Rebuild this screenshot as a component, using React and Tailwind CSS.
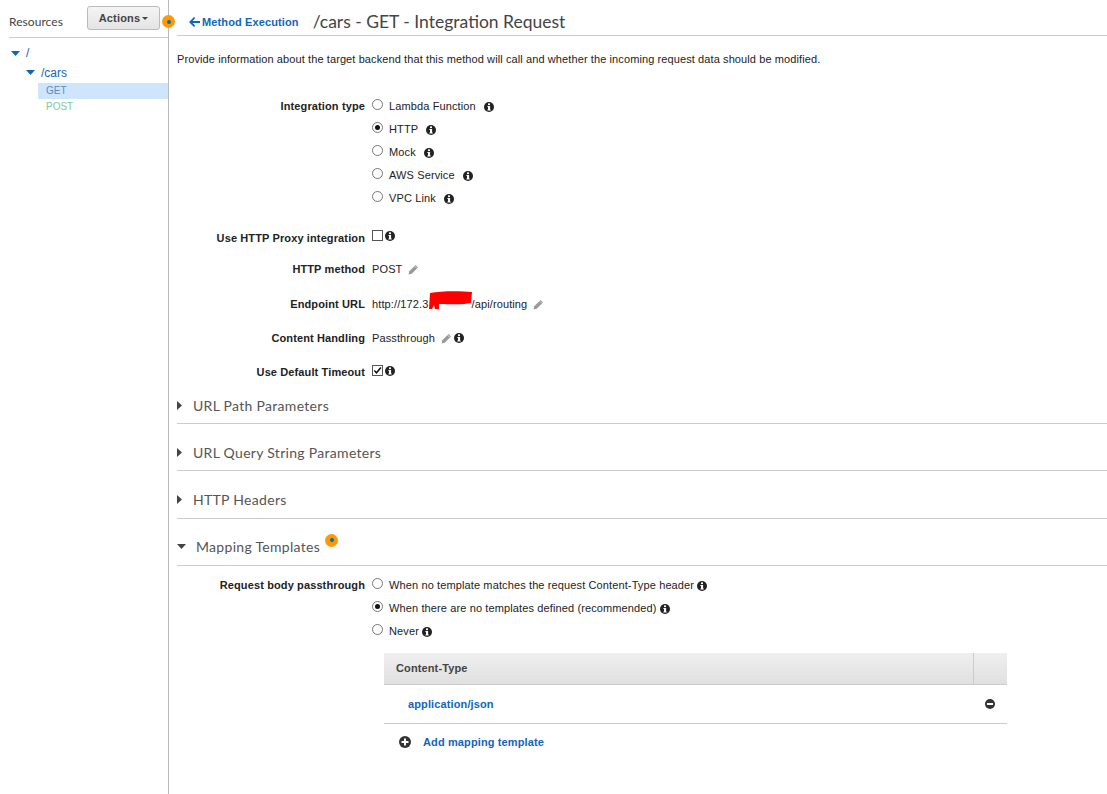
const ARIAL = "font-['Liberation_Sans',Arial,sans-serif]";

function Info({ className = "" }) {
  return (
    <svg width="10" height="10" viewBox="0 0 10 10" className={"shrink-0 " + className}>
      <circle cx="5" cy="5" r="5" fill="#222" />
      <rect x="4" y="1.4" width="2" height="1.7" fill="#fff" />
      <path d="M3.4 4h2.7v3.6h.6v1H3.4v-1H4V5h-.6z" fill="#fff" />
    </svg>
  );
}

function Pencil() {
  return (
    <svg width="11" height="11" viewBox="0 0 11 11" className="shrink-0">
      <path d="M0.500 10.500l.8-3.200L7.600 1l2.400 2.400-6.300 6.300z" fill="#999" />
      <path d="M6.600 2.100l2.300 2.300" stroke="#fff" strokeWidth="0.6" />
    </svg>
  );
}

function Radio({ checked }) {
  return (
    <span className="w-[11px] h-[11px] mb-[4px] rounded-full border border-[#777] bg-white flex items-center justify-center shrink-0">
      {checked && <span className="w-[5px] h-[5px] rounded-full bg-[#111]" />}
    </span>
  );
}

function Dot({ className = "" }) {
  return (
    <span className={"w-[13px] h-[13px] rounded-full bg-[#f90] flex items-center justify-center shrink-0 " + className}>
      <span className="w-[4px] h-[4px] rounded-full bg-[#1166bb]" />
    </span>
  );
}

function Caret({ open, className = "" }) {
  return open ? (
    <svg width="9" height="5" viewBox="0 0 9 5" className={"shrink-0 " + className}>
      <path d="M0 0h9L4.500 5z" fill="currentColor" />
    </svg>
  ) : (
    <svg width="5" height="9" viewBox="0 0 5 9" className={"shrink-0 " + className}>
      <path d="M0 0l5 4.500L0 9z" fill="currentColor" />
    </svg>
  );
}

function Row({ label, h, labelClass = "", children }) {
  return (
    <div className="flex items-center" style={{ height: h }}>
      <div className={"w-[188px] text-right font-bold text-[#222] shrink-0 " + labelClass}>{label}</div>
      <div className="pl-[7px] flex items-center text-[#222]">{children}</div>
    </div>
  );
}

function RadioRow({ checked, label, gap = "ml-[8px]" }) {
  return (
    <div className="h-[23px] flex items-center text-[#222]">
      <Radio checked={checked} />
      <span className="ml-[6px]">{label}</span>
      <Info className={gap} />
    </div>
  );
}

function Section({ label, h = "h-[47px]", pt = "pt-[11px]" }) {
  return (
    <div className={h + " " + pt + " border-b border-[#ccc] flex items-center text-[#555] font-['Lato',sans-serif] text-[14px] tracking-[0.3px]"}>
      <Caret className="text-[#444] mr-[11px]" />
      {label}
    </div>
  );
}

export default function App() {
  return (
    <div className={"flex w-[1107px] h-[794px] bg-white overflow-hidden text-[11px] tracking-[0.12px] " + ARIAL}>
      <aside className="w-[169px] shrink-0 border-r border-[#bbb] pl-[9px]">
        <div className="h-[38px] border-b border-[#ccc] flex items-start justify-between">
          <span className="mt-[13px] text-[#444] font-['Lato',sans-serif] text-[12px] tracking-[0.05px]">Resources</span>
          <button className="mt-[6px] w-[73px] h-[24px] rounded-[3px] border border-[#bbb] bg-gradient-to-b from-[#f4f4f4] to-[#e4e4e4] text-[#444] font-bold tracking-[0.2px] flex items-center justify-center gap-[2px] mr-[8px]">
            Actions
            <svg width="6" height="3" viewBox="0 0 6 3"><path d="M0 0h6L3 3z" fill="#444" /></svg>
          </button>
        </div>
        <div className="pt-[6px] text-[#1166bb] text-[12px] tracking-normal">
          <div className="h-[18px] flex items-center pl-[2px]">
            <Caret open className="text-[#1166bb]" />
            <span className="ml-[6px]">/</span>
          </div>
          <div className="h-[21px] flex items-center pl-[17px]">
            <Caret open className="text-[#1166bb]" />
            <span className="ml-[6px]">/cars</span>
          </div>
          <div className="ml-[29px] h-[16px] bg-[#cfe5fb] flex items-center pl-[8px] pb-[2px] text-[#5a8bc4] text-[10px]">GET</div>
          <div className="ml-[29px] h-[16px] flex items-center pl-[8px] pb-[2px] text-[#7fc99a] text-[10px]">POST</div>
        </div>
      </aside>

      <main className="flex-1 min-w-0 relative pl-[8px]">
        <Dot className="absolute left-[-7px] top-[15px]" />
        <header className="h-[36px] border-b border-[#ccc] flex items-center pl-[12px] pt-[9px]">
          <a className="flex items-center text-[#1166bb] font-bold whitespace-nowrap">
            <svg width="11" height="10" viewBox="0 0 11 10" className="mr-[2px]">
              <path d="M5 0l1.200 1.200-2.600 2.800H11v2H3.600l2.600 2.800L5 10 0 5z" fill="#1166bb" />
            </svg>
            Method Execution
          </a>
          <h1 className="ml-[14px] text-[17.5px] leading-none tracking-normal text-[#444] font-['Lato',sans-serif] font-normal whitespace-nowrap">/cars - GET - Integration Request</h1>
        </header>
        <p className="mt-[16px] h-[14px] leading-[14px] text-[#222] tracking-[0.1px] whitespace-nowrap">Provide information about the target backend that this method will call and whether the incoming request data should be modified.</p>

        <div className="mt-[29px]">
          <div className="flex">
            <div className="w-[188px] text-right font-bold text-[#222] h-[23px] leading-[23px] shrink-0">Integration type</div>
            <div className="pl-[7px]">
              <RadioRow label="Lambda Function" />
              <RadioRow checked label="HTTP" />
              <RadioRow label="Mock" />
              <RadioRow label="AWS Service" />
              <RadioRow label="VPC Link" />
            </div>
          </div>
          <div className="mt-[14px]">
            <Row label="Use HTTP Proxy integration" h={28}>
              <span className="w-[11px] h-[11px] border border-[#555] bg-white mb-[5px]" />
              <Info className="ml-[2px] mb-[5px]" />
            </Row>
            <Row label="HTTP method" h={35}>
              POST
              <span className="ml-[6px]"><Pencil /></span>
            </Row>
            <Row label="Endpoint URL" h={34}>
              <span className="relative whitespace-nowrap">
                http://172.3
                <span className="inline-block w-[43px]" />
                /api/routing
                <svg width="44" height="19" viewBox="0 0 44 19" className="absolute left-[57px] top-[-5px]">
                  <path d="M1 2C12 0 30 0 43 1L42 12C34 14 20 13 10 13L10 18H6L5 14L3 18H0z" fill="#f00" />
                </svg>
              </span>
              <span className="ml-[6px]"><Pencil /></span>
            </Row>
            <Row label="Content Handling" h={34}>
              Passthrough
              <span className="ml-[6px]"><Pencil /></span>
              <Info className="ml-[2px]" />
            </Row>
            <Row label="Use Default Timeout" h={33} labelClass="pt-[2px]">
              <span className="w-[11px] h-[11px] border border-[#555] bg-white mb-[2px] relative">
                <svg width="11" height="11" viewBox="0 0 11 11" className="absolute left-[-1px] top-[-1px]">
                  <path d="M2.300 5.500l2.200 2.300 4.400-5.300" stroke="#111" strokeWidth="1.500" fill="none" />
                </svg>
              </span>
              <Info className="ml-[2px] mb-[2px]" />
            </Row>
          </div>
        </div>

        <div className="mt-[-11px]">
          <Section label="URL Path Parameters" />
          <Section label="URL Query String Parameters" />
          <Section label="HTTP Headers" h="h-[48px]" pt="pt-[10px]" />
          <div className="h-[47px] border-b border-[#ccc] flex items-center pt-[8px] text-[#555] font-['Lato',sans-serif] text-[14px] tracking-[0.3px]">
            <Caret open className="text-[#444] mr-[10px]" />
            Mapping Templates
            <Dot className="ml-[5px] mt-[-12px]" />
          </div>
        </div>

        <div className="pt-[8px]">
          <div className="flex">
            <div className="w-[188px] text-right font-bold text-[#222] h-[23px] leading-[23px] shrink-0">Request body passthrough</div>
            <div className="pl-[7px]">
              <RadioRow label="When no template matches the request Content-Type header" gap="ml-[3px]" />
              <RadioRow checked label="When there are no templates defined (recommended)" gap="ml-[3px]" />
              <RadioRow label="Never" gap="ml-[3px]" />
            </div>
          </div>
          <div className="ml-[207px] w-[623px] mt-[10px]">
            <div className="flex h-[32px] bg-gradient-to-b from-[#efefef] to-[#e0e0e0] border-b border-[#ccc] text-[#444] font-bold">
              <div className="flex-1 flex items-center pl-[12px] border-r border-[#ccc]">Content-Type</div>
              <div className="w-[33px]" />
            </div>
            <div className="h-[39px] border-b border-[#ccc] flex items-center justify-between pl-[24px] pr-[12px] text-[#1166bb] font-bold">
              application/json
              <svg width="10" height="10" viewBox="0 0 10 10">
                <circle cx="5" cy="5" r="5" fill="#333" />
                <rect x="2" y="4" width="6" height="2" fill="#fff" />
              </svg>
            </div>
            <div className="h-[36px] flex items-center pl-[15px] text-[#1166bb] font-bold">
              <svg width="12" height="12" viewBox="0 0 12 12">
                <circle cx="6" cy="6" r="6" fill="#333" />
                <path d="M5 2.500h2V5h2.500v2H7v2.500H5V7H2.500V5H5z" fill="#fff" />
              </svg>
              <span className="ml-[12px]">Add mapping template</span>
            </div>
          </div>
        </div>
      </main>
    </div>
  );
}
